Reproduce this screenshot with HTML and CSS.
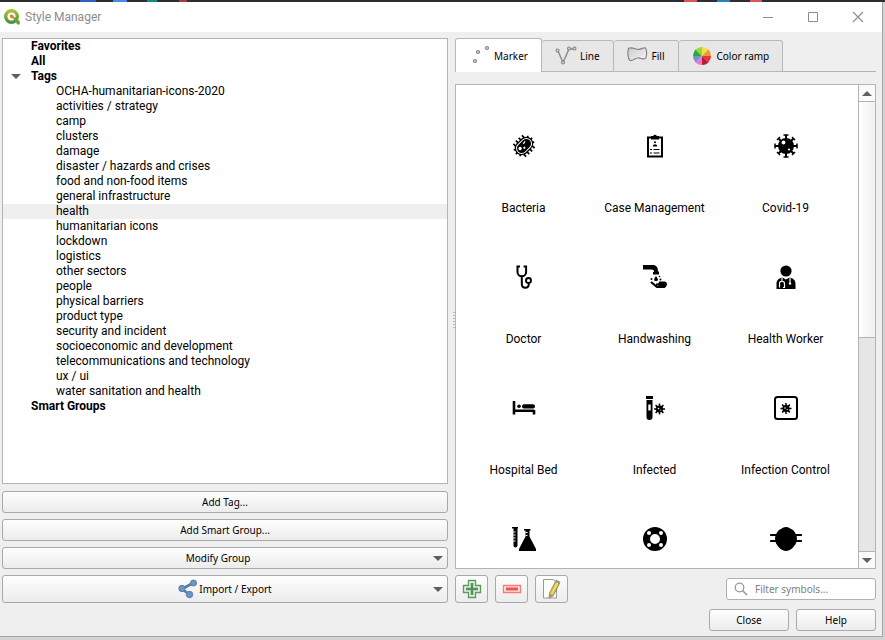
FILE: index.html
```html
<!DOCTYPE html>
<html lang="en">
<head>
<meta charset="utf-8">
<title>Style Manager</title>
<link rel="stylesheet" href="styles.css">
</head>
<body>
<svg class="defs" aria-hidden="true">
  <symbol id="germ" viewBox="0 0 12 12"><path d="M6 .5v11M.5 6h11M2.100 2.100l7.800 7.800M9.900 2.100L2.100 9.900" stroke="#000" stroke-width="1.500"/><circle cx="6" cy="6" r="3.600"/><circle cx="5" cy="5.500" r=".8" fill="#fff"/><circle cx="7.200" cy="7" r=".6" fill="#fff"/></symbol>
</svg>
<div class="desktop-strip"></div>
<main class="window">
  <header class="titlebar">
    <svg width="16" height="16" viewBox="0 0 16 16"><defs><linearGradient id="q" x2="0" y2="1"><stop offset="0" stop-color="#a3c13a"/><stop offset="1" stop-color="#4f9337"/></linearGradient></defs><circle cx="7.500" cy="7.500" r="5.800" fill="none" stroke="url(#q)" stroke-width="3.400"/><path d="M8.500 8.500h3.500l3.800 4v3h-2.500z" fill="#67a23a"/><path d="M5.800 5.800h3l1.200 1.500-.5 2-2.500 0-1.200-1.300z" fill="#ee7a38"/></svg>
    <h1>Style Manager</h1>
    <div class="caption">
      <button type="button" aria-label="Minimize"><svg width="12" height="12"><path d="M1 6.500h10" stroke="#8c8c8c"/></svg></button>
      <button type="button" aria-label="Maximize"><svg width="12" height="12"><path d="M1.500 1.500h9v9h-9z" fill="none" stroke="#8c8c8c"/></svg></button>
      <button type="button" aria-label="Close window"><svg width="12" height="12"><path d="M1 1l10 10M11 1L1 11" stroke="#8c8c8c" stroke-width="1.100"/></svg></button>
    </div>
  </header>
  <div class="content">
    <section class="groups">
      <ul class="tree">
        <li class="top">Favorites</li>
        <li class="top">All</li>
        <li class="top open">Tags</li>
        <li>OCHA-humanitarian-icons-2020</li>
        <li>activities / strategy</li>
        <li>camp</li>
        <li>clusters</li>
        <li>damage</li>
        <li>disaster / hazards and crises</li>
        <li>food and non-food items</li>
        <li>general infrastructure</li>
        <li class="selected">health</li>
        <li>humanitarian icons</li>
        <li>lockdown</li>
        <li>logistics</li>
        <li>other sectors</li>
        <li>people</li>
        <li>physical barriers</li>
        <li>product type</li>
        <li>security and incident</li>
        <li>socioeconomic and development</li>
        <li>telecommunications and technology</li>
        <li>ux / ui</li>
        <li>water sanitation and health</li>
        <li class="top">Smart Groups</li>
      </ul>
      <button type="button" class="btn">Add Tag...</button>
      <button type="button" class="btn">Add Smart Group...</button>
      <button type="button" class="btn menu"><span>Modify Group</span></button>
      <button type="button" class="btn menu tall"><span><svg width="20" height="20" viewBox="0 0 20 20"><path d="M4 10L15 4M4 10l8 6" stroke="#557da6" stroke-width="2.600"/><g fill="#6c96c4" stroke="#557da6"><circle cx="4" cy="9.500" r="3.200"/><circle cx="15.500" cy="4" r="3"/><circle cx="11.500" cy="15.500" r="3.200"/></g></svg>Import / Export</span></button>
    </section>
    <div class="splitter"></div>
    <section class="symbols">
      <div class="tabs" role="tablist">
        <button type="button" role="tab" aria-selected="true"><svg width="24" height="24" viewBox="0 0 24 24"><g fill="#d8d8d8" stroke="#858585" stroke-width="1.200"><circle cx="8" cy="17" r="1.500"/><circle cx="11" cy="8" r="1.500"/><circle cx="20" cy="4" r="1.500"/></g></svg>Marker</button>
        <button type="button" role="tab" aria-selected="false"><svg width="24" height="24" viewBox="0 0 24 24"><path d="M5 7l5 11.500L16 5h5.500" fill="none" stroke="#8b8d89" stroke-width="1.500"/><g fill="#ddd" stroke="#858585" stroke-width="1.100"><circle cx="4.500" cy="6.500" r="1.500"/><circle cx="10" cy="18.500" r="1.500"/><circle cx="16" cy="4.500" r="1.500"/><circle cx="21.500" cy="4.500" r="1.500"/></g></svg>Line</button>
        <button type="button" role="tab" aria-selected="false"><svg width="24" height="24" viewBox="0 0 24 24"><defs><linearGradient id="f" x2="1" y2="1"><stop offset="0" stop-color="#ccc"/><stop offset="1" stop-color="#f4f4f4"/></linearGradient></defs><path d="M3.500 4.500C6 2.500 10 5 13 5.500c3 0 5-2 7.500-1.500 1.500 2 1.500 8 0 10.500-3 1.500-5-1-7.500-.5-3 0-5 3-8 2.500-2.500-2-2.500-9-1.500-12z" fill="url(#f)" stroke="#858585" stroke-width="1.200"/></svg>Fill</button>
        <button type="button" role="tab" aria-selected="false"><svg width="24" height="24" viewBox="-12 -12 24 24"><path d="M0 0V-9A9 9 0 0 1 6.400-6.400z" fill="#f5df45"/><path d="M0 0L6.400-6.400A9 9 0 0 1 9 0z" fill="#e69a35"/><path d="M0 0H9A9 9 0 0 1 6.400 6.400z" fill="#ec3338"/><path d="M0 0L6.400 6.400A9 9 0 0 1 0 9z" fill="#b51f35"/><path d="M0 0V9A9 9 0 0 1-6.400 6.400z" fill="#e77bc9"/><path d="M0 0L-6.400 6.400A9 9 0 0 1-9 0z" fill="#6d94d1"/><path d="M0 0H-9A9 9 0 0 1-6.400-6.400z" fill="#35a33b"/><path d="M0 0L-6.400-6.400A9 9 0 0 1 0-9z" fill="#8edb3c"/></svg>Color ramp</button>
      </div>
      <div class="list">
        <ul class="grid">
          <li><svg viewBox="0 0 24 24"><g transform="rotate(-45 12 12)"><path d="M6 3v18M10 2.500v19M14 2.500v19M18 3v18M.5 12h23M2 7.500l2 1.500M2 16.500l2-1.500M22 7.500L20 9M22 16.500L20 15" stroke="#000" stroke-width="1.700"/><rect x="1.800" y="5" width="20.400" height="14" rx="7"/><rect x="3.500" y="6.800" width="17" height="10.400" rx="5.200" fill="none" stroke="#fff"/><circle cx="7.500" cy="11" r="1.700" fill="#fff"/><circle cx="11" cy="13.500" r="1.100" fill="#fff"/><path d="M13 10l3-.5" stroke="#fff" stroke-width="1.200"/></g></svg>Bacteria</li>
          <li><svg viewBox="0 0 24 24"><path d="M5 3.500h14v19H5z" fill="#fff" stroke="#000" stroke-width="2"/><path d="M8 2h2.200a2 2 0 0 1 3.600 0H16v3.500H8z"/><circle cx="12" cy="8.300" r="1"/><path d="M9.800 12.500c0-3 4.400-3 4.400 0z"/><path d="M7 15.500h2M10.500 15.500h6M7 19h2M10.500 19h6" stroke="#000" stroke-width="1.200"/></svg>Case Management</li>
          <li><svg viewBox="0 0 24 24"><path d="M12 1v22M1 12h22M4.500 4.500l15 15M19.500 4.500l-15 15" stroke="#000" stroke-width="2"/><path d="M9.500 1h5M9.500 23h5M1 9.500v5M23 9.500v5M3 6l3-3M18 3l3 3M3 18l3 3M18 21l3-3" stroke="#000" stroke-width="1.500"/><circle cx="12" cy="12" r="8"/><circle cx="9.500" cy="8.500" r="1.900" fill="#fff"/><circle cx="15" cy="15.500" r="1.100" fill="#fff"/></svg>Covid-19</li>
          <li><svg viewBox="0 0 24 24"><path d="M8 1.500H5.500V7a4.300 4.300 0 0 0 8.600 0V1.500h-2.500M9.800 11.500V19c0 5 7 5 7 0" fill="none" stroke="#000" stroke-width="2"/><circle cx="16.500" cy="15.500" r="2.500" fill="#fff" stroke="#000" stroke-width="1.900"/></svg>Doctor</li>
          <li><svg viewBox="0 0 24 24"><path d="M0 0h9.500c4 0 5.500 2.500 5.500 6.500h1v3h-6V7h1c0-1.500-.5-2.500-2.500-2.500H0z"/><path d="M13 11c-3 4-2 5 0 5s3-1 0-5z"/><circle cx="8.500" cy="14" r="1"/><circle cx="17.500" cy="14.500" r="1"/><circle cx="16.500" cy="11.500" r=".8"/><path d="M8 17l6 5h6c3 0 4-4.500 1-4.500h-4l-1 2h-3" fill="none" stroke="#000" stroke-width="2.200"/><path d="M14 22l3-4h4.500l1.500 2-2 3h-6z"/></svg>Handwashing</li>
          <li><svg viewBox="0 0 24 24"><circle cx="12" cy="6" r="5.600"/><path d="M2.500 24v-5c0-4 2.500-6 6-6.500l3.500 2 3.500-2c3.500.5 6 2.500 6 6.500v5z"/><path d="M8 12.500v4M5.500 22.500v-4c0-3 5-3 5 0v4H9M16 12.500v5" fill="none" stroke="#fff" stroke-width="1.200"/><circle cx="16" cy="18.500" r="1.200" fill="#fff"/></svg>Health Worker</li>
          <li><svg viewBox="0 0 24 24"><path d="M2 5v13.500M2 14.800h20M22 14v4.500" stroke="#000" stroke-width="2.600"/><circle cx="7" cy="10.300" r="1.800"/><rect x="10" y="8.200" width="13" height="4.200" rx="2"/></svg>Hospital Bed</li>
          <li><svg viewBox="0 0 24 24"><path d="M3 0h7v3H3zM3.500 4H9.500v17a3 3 0 0 1-6 0z"/><path d="M5.300 8.500h2.400v6H5.300z" fill="#fff"/><use href="#germ" x="10.500" y="7" width="12" height="12"/></svg>Infected</li>
          <li><svg viewBox="0 0 24 24"><rect x="1" y="1" width="22" height="22" rx="2.500" fill="#fff" stroke="#000" stroke-width="2"/><use href="#germ" x="6" y="6.500" width="12" height="12"/></svg>Infection Control</li>
          <li aria-label="Laboratory"><svg viewBox="0 0 24 24"><path d="M0 0h6v1.500H5.500v17a2 2 0 0 1-4 0v-17H0zM12 2h6.500v1.500h-1v6L24 22v2H7v-2l6.500-12.500v-6H12z"/><path d="M1.500 5h2M1.500 8h2M1.500 11h2M1.500 14h2M13.500 5.500h2M13.500 8.500h2" stroke="#fff"/></svg></li>
          <li aria-label="Life ring"><svg viewBox="0 0 24 24"><circle cx="12" cy="12" r="8.500" fill="none" stroke="#000" stroke-width="7"/><g fill="#fff"><circle cx="6" cy="6" r="2"/><circle cx="18" cy="6" r="2"/><circle cx="6" cy="18" r="2"/><circle cx="18" cy="18" r="2"/></g></svg></li>
          <li aria-label="Mask"><svg class="wide" viewBox="0 0 32 24"><path d="M16 0c3 0 4 1.500 7 3 2.500 2.500 4 5.500 4 9s-2 6.500-5 9.500c-3.500 3.300-8.500 3.300-12 0-3-3-5-6-5-9.500s1.500-6.500 4-9c3-1.500 4-3 7-3z"/><path d="M1 8h6M1 14h6M25 8h6M25 14h6" stroke="#000" stroke-width="2.200" stroke-linecap="round"/></svg></li>
        </ul>
        <div class="scrollbar">
          <button type="button" class="up" aria-label="Scroll up"></button>
          <div class="thumb"></div>
          <div class="track"></div>
          <button type="button" class="down" aria-label="Scroll down"></button>
        </div>
      </div>
      <div class="tools">
        <button type="button" class="btn tool" aria-label="Add item"><svg width="20" height="20" viewBox="0 0 20 20"><path d="M6.500 1.500h7v5h5v7h-5v5h-7v-5h-5v-7h5z" fill="#e4f0e2" stroke="#5b9a5b" stroke-width="1.300"/><path d="M10 4v12M4 10h12" stroke="#55915a" stroke-width="2.600"/></svg></button>
        <button type="button" class="btn tool" aria-label="Remove item"><svg width="20" height="20" viewBox="0 0 20 20"><path d="M1.500 6.500h17v7h-17z" fill="#fde4e2" stroke="#f47c7c" stroke-width="1.300"/><path d="M4 10h12" stroke="#ef5350" stroke-width="3"/></svg></button>
        <button type="button" class="btn tool" aria-label="Edit item"><svg width="20" height="20" viewBox="0 0 20 20"><path d="M1.500.500h10l3 3.500v15h-13z" fill="#fff" stroke="#999"/><path d="M13.500 2.500l4 2-6.500 12.500-4 2 .5-5z" fill="#d8c23d" stroke="#8d7f35" stroke-width=".8"/><path d="M15.500 3.700L9.500 15" stroke="#f3e58a" stroke-width="1.300"/><path d="M7.500 14l3.500 3-4 2.200zM14 .5l4.500 2.500-1 2-4.500-2.500z" fill="#999"/></svg></button>
        <label class="filter"><svg width="14" height="14" viewBox="0 0 14 14"><circle cx="5.500" cy="5.500" r="4.300" fill="none" stroke="#999" stroke-width="1.300"/><path d="M8.500 8.500l4.500 4.500" stroke="#999" stroke-width="1.600"/></svg><input type="text" placeholder="Filter symbols..." aria-label="Filter symbols"></label>
      </div>
      <footer class="actions">
        <button type="button" class="btn">Close</button>
        <button type="button" class="btn">Help</button>
      </footer>
    </section>
  </div>
</main>
</body>
</html>
```
FILE: styles.css
```css
* { box-sizing: border-box; }

body {
  margin: 0;
  height: 100vh;
  display: flex;
  flex-direction: column;
  overflow: hidden;
  background: #d3d3d3;
  color: #000;
  font: 12px/15px Roboto, sans-serif;
}

button, input { font: 10px/14px "Noto Sans", sans-serif; color: #000; }
ul { list-style: none; margin: 0; padding: 0; }
svg { flex: none; }
.defs { display: none; }

.desktop-strip {
  flex: none;
  height: 2px;
  background: linear-gradient(90deg, #2d2d35 0 80px, #3060c0 80px 96px, #2d2d35 96px 113px, #4a8be0 113px 127px, #2d2d35 127px 147px, #148a80 147px 157px, #2d2d35 157px 179px, #a83a40 179px 187px, #2d2d35 187px 684px, #d55 684px 697px, #2d2d35 697px 717px, #2a7fc0 717px 730px, #2d2d35 730px 750px, #d55 750px 762px, #2d2d35 762px);
}

.window {
  flex: 1;
  min-height: 0;
  display: flex;
  flex-direction: column;
  margin: 0 2px 3px 0;
  border: solid #a4a4a4;
  border-width: 0 1px 1px 0;
  background: #efefef;
}

.titlebar {
  flex: none;
  display: flex;
  align-items: center;
  gap: 5px;
  height: 30px;
  padding: 0 2px 0 4px;
  background: #fff;
}
.titlebar h1 { flex: 1; margin: 0; font-size: 12px; font-weight: 400; color: #8c8c8c; }
.caption { display: flex; }
.caption button {
  display: grid;
  place-items: center;
  width: 45px;
  height: 28px;
  padding: 0;
  border: 0;
  background: none;
}

.content {
  flex: 1;
  min-height: 0;
  display: flex;
  padding: 6px 6px 5px 2px;
}
.groups, .symbols { min-width: 0; min-height: 0; display: flex; flex-direction: column; }
.groups { flex: 446 1 0; gap: 6px; padding-bottom: 28px; }
.symbols { flex: 421 1 0; }

.splitter {
  width: 7px;
  display: grid;
  place-items: center end;
  padding-bottom: 28px;
}
.splitter::after {
  content: "";
  width: 2px;
  height: 18px;
  background: repeating-linear-gradient(#bbb 0 1px, transparent 1px 3px);
}

.tree {
  flex: 1;
  min-height: 0;
  margin-bottom: 1px;
  overflow: hidden;
  border: 1px solid #b4b4b4;
  background: #fff;
}
.tree li { height: 15px; padding-left: 53px; white-space: nowrap; }
.tree .top { padding-left: 28px; font-weight: 700; }
.tree .selected { background: #efefef; }
.tree .open { display: flex; align-items: center; gap: 10px; padding-left: 8px; }
.tree .open::before, .menu::after, .down::after {
  content: "";
  border: 5px solid transparent;
  border-top-color: #606060;
  border-bottom: 0;
}

.btn {
  flex: none;
  display: flex;
  align-items: center;
  justify-content: center;
  height: 22px;
  padding: 0;
  border: 1px solid #a9a9a9;
  border-radius: 3px;
  background: linear-gradient(#fefefe, #ececec);
}
.menu { padding-right: 4px; }
.menu span { flex: 1; display: flex; align-items: center; justify-content: center; gap: 1px; }
.tall { height: 28px; padding-left: 14px; }

.tabs {
  flex: none;
  display: flex;
  align-items: flex-end;
  height: 34px;
  margin-bottom: 12px;
  box-shadow: inset 0 -1px #b4b4b4;
}
.tabs button {
  display: flex;
  align-items: center;
  gap: 3px;
  height: 32px;
  padding: 0 13px 0 11px;
  border: 1px solid #b8b8b8;
  border-left-width: 0;
  border-radius: 3px 3px 0 0;
  background: #e7e7e7;
}
.tabs [aria-selected="true"] {
  height: 34px;
  border-left-width: 1px;
  border-bottom: 0;
  background: #fff;
}

.list {
  flex: 1;
  min-height: 0;
  display: flex;
  border: 1px solid #b4b4b4;
  background: #fff;
}
.grid {
  flex: 1;
  display: grid;
  grid-template-columns: repeat(auto-fill, 131px);
  grid-auto-rows: 131px;
  padding-left: 2px;
  overflow: hidden;
}
.grid li {
  display: flex;
  flex-direction: column;
  align-items: center;
  gap: 43px;
  padding-top: 49px;
  white-space: nowrap;
}
.grid svg { width: 24px; height: 24px; }
.grid .wide { width: 32px; }

.scrollbar {
  flex: none;
  display: flex;
  flex-direction: column;
  width: 17px;
  border-left: 1px solid #b4b4b4;
}
.scrollbar button {
  display: grid;
  place-items: center;
  height: 17px;
  padding: 0;
  border: 0 solid #b4b4b4;
  background: #fafafa;
}
.scrollbar .up { border-bottom-width: 1px; }
.scrollbar .down { border-top-width: 1px; }
.up::after { content: ""; border: 5px solid transparent; border-bottom-color: #606060; border-top: 0; }
.thumb {
  flex: 235 1 0;
  border-bottom: 1px solid #b4b4b4;
  background: linear-gradient(90deg, #fff, #f1f1f1);
}
.track { flex: 213 1 0; background: #e6e6e6; }

.tools { display: flex; align-items: center; gap: 7px; margin: 6px 0; }
.tool { width: 33px; height: 28px; }
.filter {
  display: flex;
  align-items: center;
  gap: 7px;
  width: 150px;
  height: 22px;
  margin-left: auto;
  padding-left: 7px;
  border: 1px solid #b0b0b0;
  border-radius: 3px;
  background: #fff;
}
.filter input { flex: 1; min-width: 0; padding: 0; border: 0; outline: 0; background: none; }
.filter input::placeholder { color: #808080; opacity: 1; }

.actions { display: flex; justify-content: flex-end; gap: 7px; }
.actions .btn { width: 80px; }
```
